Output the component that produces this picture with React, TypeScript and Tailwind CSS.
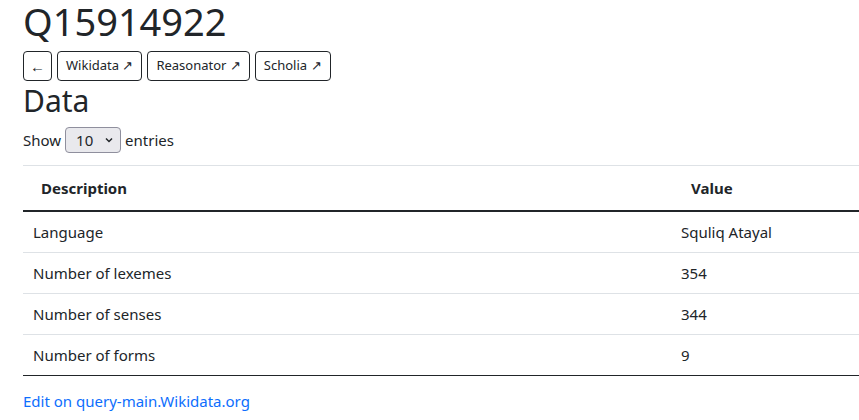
import React from 'react';

const rows = [
  { label: 'Language', value: 'Squliq Atayal' },
  { label: 'Number of lexemes', value: '354' },
  { label: 'Number of senses', value: '344' },
  { label: 'Number of forms', value: '9' }
];

const links = ['Wikidata ↗', 'Reasonator ↗', 'Scholia ↗'];

export default function App() {
  return <div className="min-h-[420px] bg-white pl-[23px] pt-[1px] text-[#212529] overflow-hidden" style={{ fontFamily: '"Noto Sans", "Liberation Sans", sans-serif' }}>
      <h1 className="text-[38px] leading-[40px] mb-[10px]">Q15914922</h1>
      <div className="flex gap-[5px]">
        <button className="h-[30px] w-[29px] border border-[#212529] rounded-[4px] text-[15px] flex items-center justify-center">←</button>
        {links.map(l => <button key={l} className="h-[30px] px-[8px] border border-[#212529] rounded-[4px] text-[13px] flex items-center">
            {l}
          </button>)}
      </div>
      <h2 className="text-[30px] leading-[36px] mt-[2px]">Data</h2>
      <div className="flex items-center gap-[4px] text-[15px] mt-[8px] h-[26px]">
        <span>Show</span>
        <div className="w-[56px] h-[26px] bg-[#e9e9ed] border border-[#8f8f9d] rounded-[4px] flex items-center justify-between pl-[10px] pr-[6px] text-[15px]">
          <span>10</span>
          <svg width="10" height="10" viewBox="0 0 10 10" fill="none" stroke="#212529" strokeWidth="1.5">
            <path d="M2 3.5l3 3 3-3" />
          </svg>
        </div>
        <span>entries</span>
      </div>
      <table className="w-[836px] mt-[12px] text-[15px] border-collapse">
        <thead>
          <tr className="border-t border-[#dee2e6] border-b-2 border-b-[#212529]">
            <th className="text-left font-bold pl-[18px] h-[45px] w-[648px]">Description</th>
            <th className="text-left font-bold pl-[20px]">Value</th>
          </tr>
        </thead>
        <tbody>
          {rows.map((r, i) => <tr key={r.label} className={i === rows.length - 1 ? 'border-b border-[#212529]' : 'border-b border-[#dee2e6]'}>
              <td className={i === 0 ? 'pl-[10px] h-[42px]' : 'pl-[10px] h-[41px]'}>{r.label}</td>
              <td className="pl-[10px]">{r.value}</td>
            </tr>)}
        </tbody>
      </table>
      <a href="#" className="block mt-[14px] text-[#0d6efd] text-[15px]">Edit on query-main.Wikidata.org</a>
    </div>;
}
